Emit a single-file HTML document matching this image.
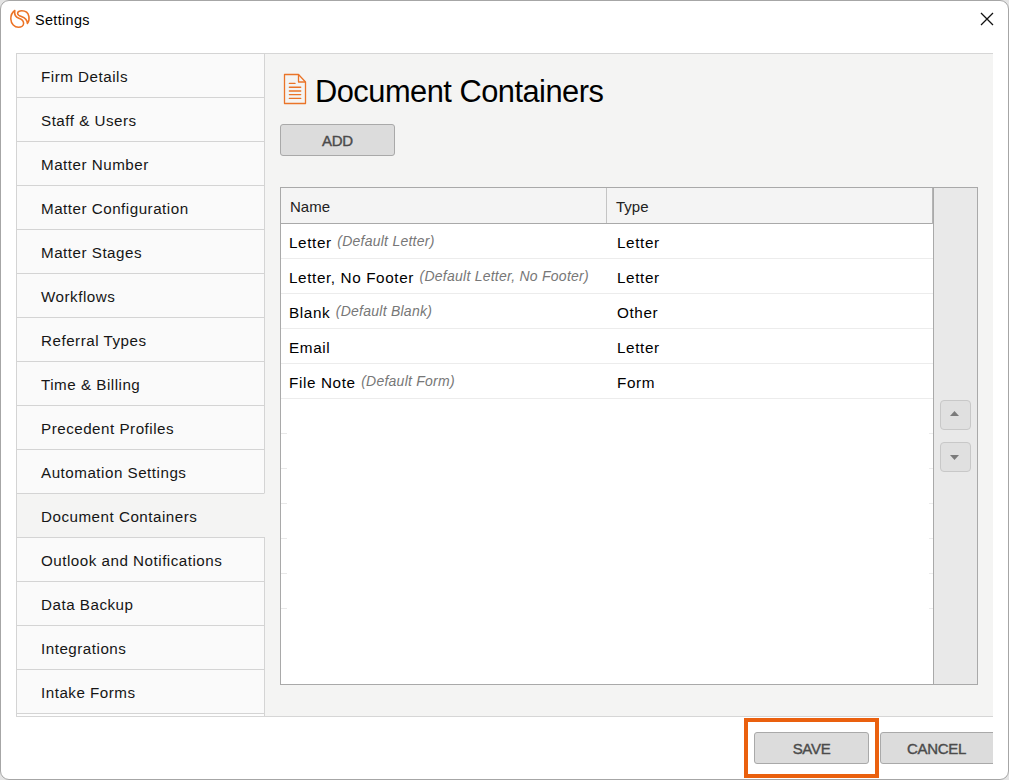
<!DOCTYPE html>
<html><head><meta charset="utf-8">
<style>
*{margin:0;padding:0;box-sizing:border-box}
html,body{width:1009px;height:780px;overflow:hidden;background:#e4e4e4;font-family:"Liberation Sans",sans-serif;color:#000;position:relative}
.a{position:absolute}
#win{left:0;top:0;width:1009px;height:780px;background:#fff;border:1px solid #a6a6a6;border-radius:9px}
#title{left:35px;top:11px;font-size:14.4px;letter-spacing:0.35px;line-height:18px;color:#000;white-space:nowrap}
#panel{left:16px;top:53px;width:977px;height:664px;background:#f4f4f3;border-top:1px solid #d6d6d6;border-bottom:1px solid #d6d6d6;border-left:1px solid #d6d6d6}
.nav{position:absolute;left:16px;width:249px;height:45px;background:#fafafa;border:1px solid #d4d4d4;font-size:15.2px;letter-spacing:0.5px;line-height:46px;padding-left:24px;white-space:nowrap;color:#161616}
.nav.sel{background:#f4f4f3;border-right-color:transparent}
.btn{position:absolute;width:115px;height:32px;background:#dcdcdc;border:1px solid #a9a9a9;border-radius:3px;font-size:15px;font-weight:normal;-webkit-text-stroke:0.4px #4b4b4b;letter-spacing:-0.3px;color:#4b4b4b;text-align:center;line-height:31px}
#h1{left:315px;top:72px;font-size:30.8px;letter-spacing:-0.5px;line-height:40px;white-space:nowrap}
#table{left:280px;top:187px;width:698px;height:498px;background:#fff;border:1px solid #a9a9a9}
#thead{left:281px;top:188px;width:652px;height:36px;background:#f4f4f4;border-bottom:1px solid #a9a9a9}
.th{position:absolute;font-size:15px;line-height:18px;color:#222;white-space:nowrap}
.row{position:absolute;left:281px;width:652px;height:35px;border-bottom:1px solid #ececec}
.cell{position:absolute;font-size:15.3px;letter-spacing:0.6px;line-height:18px;white-space:nowrap}
.cell i{letter-spacing:0.25px;font-size:14px;color:#777;position:relative;top:-2px;margin-left:5.5px}
#scroll{left:933px;top:187px;width:45px;height:498px;background:#e9e9e9;border:1px solid #a9a9a9}
.sb{position:absolute;left:940px;width:31px;height:30px;background:#e0e0e0;border:1px solid #c8c8c8;border-radius:4px}
.tick{position:absolute;left:281px;width:6px;height:1px;background:#e8e8e8}
.tickr{position:absolute;left:929px;width:4px;height:1px;background:#ececec}
</style></head><body>
<div id="win" class="a"></div>
<svg class="a" style="left:6px;top:6px" width="28" height="26" viewBox="0 0 28 26">
<g fill="none" stroke="#ec7325" stroke-width="1.55" stroke-linejoin="round">
<path d="M8.8 4.5 C5.9 6.5 4.8 9.8 4.8 13 C5 17.8 8.6 21.3 12.4 21.3 C15.5 21.3 17.6 19.5 17.6 17.2 C17.6 14.7 15.6 13.3 12.8 12.3 C10 11.3 8 9.6 8.8 4.5 Z"/>
<path d="M21.4 17.4 C23 15.5 23.3 12.6 22.9 10.5 C22.2 6.9 19.2 4.8 15.8 4.8 C13.3 4.8 11.6 5.8 11.6 7.4 C11.6 9 13.3 9.7 15.4 10.4 C18.4 11.4 21.2 13 21.4 17.4 Z"/>
</g></svg>
<div id="title" class="a">Settings</div>
<svg class="a" style="left:980px;top:12px" width="14" height="14" viewBox="0 0 14 14"><path d="M1 1 L13 13 M13 1 L1 13" stroke="#111" stroke-width="1.3"/></svg>
<div id="panel" class="a"></div>
<div class="nav" style="top:53px">Firm Details</div>
<div class="nav" style="top:97px">Staff &amp; Users</div>
<div class="nav" style="top:141px">Matter Number</div>
<div class="nav" style="top:185px">Matter Configuration</div>
<div class="nav" style="top:229px">Matter Stages</div>
<div class="nav" style="top:273px">Workflows</div>
<div class="nav" style="top:317px">Referral Types</div>
<div class="nav" style="top:361px">Time &amp; Billing</div>
<div class="nav" style="top:405px">Precedent Profiles</div>
<div class="nav" style="top:449px">Automation Settings</div>
<div class="nav sel" style="top:493px">Document Containers</div>
<div class="nav" style="top:537px">Outlook and Notifications</div>
<div class="nav" style="top:581px">Data Backup</div>
<div class="nav" style="top:625px">Integrations</div>
<div class="nav" style="top:669px">Intake Forms</div>
<div class="a" style="left:16px;top:714px;width:249px;height:2px;background:#fdfdfd;border-left:1px solid #d4d4d4;border-right:1px solid #d4d4d4"></div>
<svg class="a" style="left:281px;top:71px" width="30" height="36" viewBox="0 0 30 36">
<g fill="none" stroke="#ea7428" stroke-width="1.3" stroke-linejoin="round">
<path d="M3.5 3.5 H17.5 L24.5 11 V32.5 H3.5 Z"/>
<path d="M17.5 3.5 V11 H24.5"/>
</g>
<g stroke="#ea7428" stroke-width="1.4" stroke-linecap="round">
<path d="M8.4 12.4 H14"/><path d="M8.4 16.2 H19.7"/><path d="M8.4 20 H19.7"/><path d="M8.4 23.6 H19.7"/><path d="M8.4 27.4 H19.7"/>
</g></svg>
<div id="h1" class="a">Document Containers</div>
<div class="btn" style="left:280px;top:124px">ADD</div>
<div id="table" class="a"></div>
<div id="thead" class="a"></div>
<div class="a" style="left:606px;top:188px;width:1px;height:35px;background:#c4c4c4"></div>
<div class="a" style="left:932px;top:188px;width:1px;height:36px;background:#b4b4b4"></div>
<div class="th" style="left:290px;top:198px">Name</div>
<div class="th" style="left:616px;top:198px">Type</div>
<div class="row" style="top:224px"></div>
<div class="cell" style="left:289px;top:234px">Letter<i>(Default Letter)</i></div>
<div class="cell" style="left:617px;top:234px">Letter</div>
<div class="row" style="top:259px"></div>
<div class="cell" style="left:289px;top:269px">Letter, No Footer<i>(Default Letter, No Footer)</i></div>
<div class="cell" style="left:617px;top:269px">Letter</div>
<div class="row" style="top:294px"></div>
<div class="cell" style="left:289px;top:304px">Blank<i>(Default Blank)</i></div>
<div class="cell" style="left:617px;top:304px">Other</div>
<div class="row" style="top:329px"></div>
<div class="cell" style="left:289px;top:339px">Email</div>
<div class="cell" style="left:617px;top:339px">Letter</div>
<div class="row" style="top:364px"></div>
<div class="cell" style="left:289px;top:374px">File Note<i>(Default Form)</i></div>
<div class="cell" style="left:617px;top:374px">Form</div>
<div class="tick" style="top:433px"></div><div class="tickr" style="top:433px"></div>
<div class="tick" style="top:468px"></div><div class="tickr" style="top:468px"></div>
<div class="tick" style="top:503px"></div><div class="tickr" style="top:503px"></div>
<div class="tick" style="top:538px"></div><div class="tickr" style="top:538px"></div>
<div class="tick" style="top:573px"></div><div class="tickr" style="top:573px"></div>
<div class="tick" style="top:608px"></div><div class="tickr" style="top:608px"></div>
<div id="scroll" class="a"></div>
<div class="sb" style="top:400px"><svg class="a" style="left:0;top:0" width="29" height="29"><path d="M9 15 L18 15 L13.5 10 Z" fill="#7b7b7b"/></svg></div>
<div class="sb" style="top:442px"><svg class="a" style="left:0;top:0" width="29" height="29"><path d="M9 12 L18 12 L13.5 17 Z" fill="#7b7b7b"/></svg></div>
<div class="btn" style="left:754px;top:732px">SAVE</div>
<div class="a" style="left:880px;top:725px;width:113px;height:45px;overflow:hidden"><div class="btn" style="left:0;top:7px;width:117px;padding-right:4px">CANCEL</div></div>
<div class="a" style="left:744px;top:718px;width:135px;height:60px;border:4px solid #ea600e"></div>
</body></html>
